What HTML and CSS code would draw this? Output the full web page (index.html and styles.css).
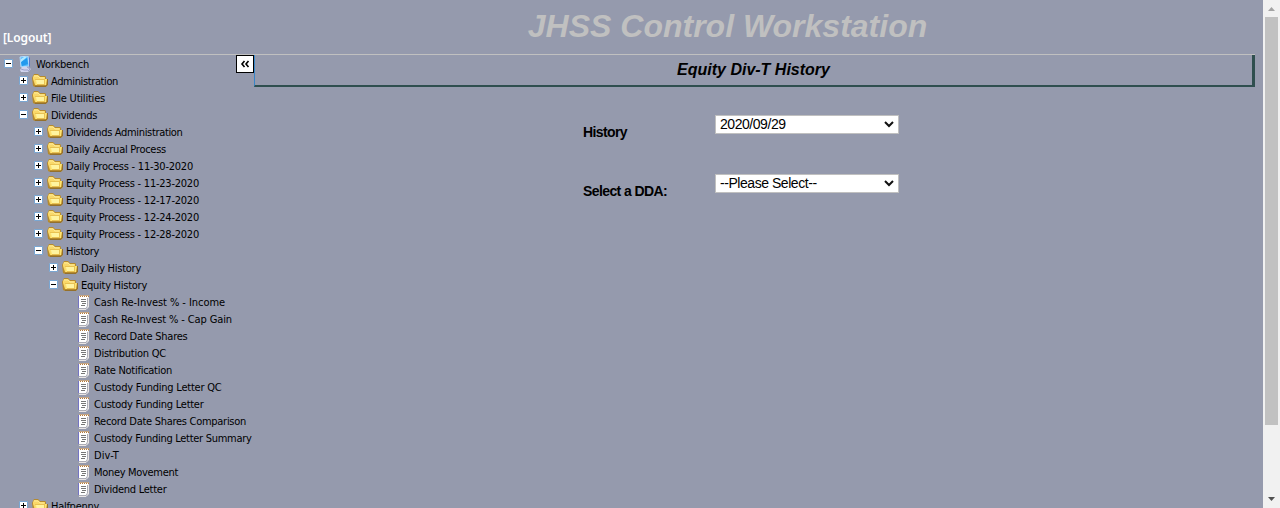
FILE: index.html
```html
<!DOCTYPE html>
<html lang="en">
<head>
<meta charset="utf-8">
<title>JHSS Control Workstation</title>
<link rel="stylesheet" href="styles.css">
</head>
<body>
<svg class="defs" width="0" height="0">
  <symbol id="folder" viewBox="0 0 16 13">
    <path d="M1 2l1-2h4l2 2h5l1 1v2h2v6l-2 2H3l-2-1-1-8z" fill="#b58a2e"/>
    <path d="M1 3l1-2h4l2 2h5v2H4v6H3L1 5z" fill="#f9d869"/>
    <path d="M2 2h4l2 2h4" fill="none" stroke="#fff0a5" stroke-width=".8"/>
    <path d="M3 5h12l-1 6H4z" fill="#ffe571"/>
    <path d="M4 6h8v4H5z" fill="#fff4a0"/>
    <path d="M3 5.500h9M12.500 5v5M5 10.500h8" fill="none" stroke="#dfb345" stroke-width=".7"/>
    <path d="M3 12.500h11M14.500 11v1M15.500 5v6" fill="none" stroke="#94702c"/>
  </symbol>
  <symbol id="note" viewBox="0 0 12 16">
    <path d="M1 2h9v11l-2 2H1z" fill="#fff"/>
    <path d="M.5 2v12" stroke="#7474c4"/>
    <path d="M1 1.500h10" stroke="#e2dcd5"/>
    <path d="M2 1v1M4 1v1M6 1v1M8 1v1M10 1v1" stroke="#a76c2c"/>
    <path d="M2 2.500h1M4 2.500h1M6 2.500h1M8 2.500h1M10 2.500h1" stroke="#b5793a"/>
    <path d="M3 5.500h5M3 7.500h5M4 9.500h4M3 11.500h4" stroke="#777"/>
    <path d="M10.500 3v10L8 15.500H1" fill="none" stroke="#e9e5e5"/>
    <path d="M9.500 4v8L8 14.500H1" fill="none" stroke="#8a8a96" stroke-width=".7"/>
  </symbol>
  <symbol id="computer" viewBox="0 0 13 16">
    <path d="M1 1l8-1 1 10-8 1z" fill="#55b9fa" stroke="#b5dcff"/>
    <path d="M2 6l6-4 1 6-6 2z" fill="#2299ee"/>
    <path d="M2 3l3-2h3L2 6z" fill="#b1eaff"/>
    <path d="M10 1l1 1v8l-1 1z" fill="#5878ca"/>
    <path d="M3 11h6l3 2-3 3H2l-1-2z" fill="#d0d3ec"/>
    <path d="M2 13l3 1h4M8 11l3 2-2 2" fill="none" stroke="#8a92c2" stroke-width=".8"/>
  </symbol>
</svg>
<div class="app">
  <div class="page">
    <header class="header">
      <a class="logout">[Logout]</a>
      <h1 class="brand">JHSS Control Workstation</h1>
    </header>
    <div class="body">
      <nav class="sidebar">
        <div class="tree" id="tree"></div>
        <button class="collapse" aria-label="Collapse"><svg width="10" height="8" viewBox="0 0 10 8"><path d="M4.500 1L2 4l2.500 3M8.500 1L6 4l2.500 3" fill="none" stroke="#000" stroke-width="1.600"/></svg></button>
      </nav>
      <main class="main">
        <h2 class="title">Equity Div-T History</h2>
        <form class="form">
          <div class="field"><label class="label" for="history">History</label><div class="control"><select class="select" id="history"><option>2020/09/29</option></select><svg class="chevron" width="10" height="7" viewBox="0 0 10 7"><path d="M1 1l4 4 4-4" fill="none" stroke="#111" stroke-width="2"/></svg></div></div>
          <div class="field"><label class="label" for="dda">Select a DDA:</label><div class="control"><select class="select" id="dda"><option>--Please Select--</option></select><svg class="chevron" width="10" height="7" viewBox="0 0 10 7"><path d="M1 1l4 4 4-4" fill="none" stroke="#111" stroke-width="2"/></svg></div></div>
        </form>
      </main>
    </div>
  </div>
  <div class="scrollbar">
    <svg class="arrow" width="17" height="17"><path d="M5 11h7l-3.500-4z" fill="#a3a3a3"/></svg>
    <div class="thumb"></div>
    <svg class="arrow" width="17" height="17"><path d="M5 6h7l-3.500 4z" fill="#505050"/></svg>
  </div>
</div>
<script src="tree.js"></script>
</body>
</html>
```

FILE: styles.css
```css
* { box-sizing: border-box; }
body { margin: 0; background: #959aad; color: #000; font-family: "Liberation Sans", Arial, sans-serif; overflow: hidden; }
.defs { position: absolute; }
.app { display: flex; height: 508px; overflow: hidden; }
.page { width: 1263px; padding-right: 8px; }
.header { display: flex; height: 55px; border-bottom: 1px solid #c0c0c0; }
.logout { width: 200px; padding: 30px 0 0 3px; color: #fff; font: 600 12px/16px "Noto Sans", sans-serif; letter-spacing: -.13px; }
.brand { flex: 1; margin: 0; padding-top: 7px; text-align: center; color: #c0c0c0; font: italic bold 32px/38px "Liberation Sans", sans-serif; }
.body { display: flex; }
.sidebar { display: flex; position: relative; width: 254px; height: 453px; overflow: hidden; }
.tree { width: 254px; }
.row { display: flex; align-items: center; height: 17px; padding-left: 4px; white-space: nowrap; }
.level-1 { padding-left: 19px; }
.level-2 { padding-left: 34px; }
.level-3 { padding-left: 49px; }
.level-4 { padding-left: 78px; }
.toggle { flex: none; width: 9px; height: 9px; margin-right: 4px; }
.icon { flex: none; width: 16px; height: 13px; margin-right: 3px; }
.computer { width: 13px; height: 16px; margin: 0 4px 0 2px; }
.note { width: 12px; height: 16px; margin-right: 4px; }
.name { padding-top: 2px; font: 11px/15px "DejaVu Sans Condensed", "DejaVu Sans", sans-serif; font-stretch: condensed; }
.collapse { position: absolute; left: 236px; top: 0; display: flex; align-items: center; justify-content: center; width: 18px; height: 18px; padding: 0; border: 1px solid #000; background: #fff; }
.main { width: 1001px; }
.title { height: 32px; margin: 0; border-left: 1px solid #3886c8; border-bottom: 2px solid #2f4f4f; border-right: 3px solid #2f4f4f; text-align: center; font: italic bold 16px/29px "Liberation Sans", sans-serif; }
.form { display: flex; flex-direction: column; gap: 39px; padding: 28px 0 0 329px; }
.field { display: flex; height: 20px; }
.label { width: 132px; padding-top: 8px; font: bold 14px/19px "Liberation Sans", sans-serif; letter-spacing: -.6px; }
.control { position: relative; width: 184px; }
.select { appearance: none; display: block; width: 184px; height: 19px; margin: 0; padding: 0 3px 0 4px; border: 1px solid #c0c0c0; border-radius: 0; background: #fff; color: #000; font: 14px/17px "Liberation Sans", sans-serif; letter-spacing: -.45px; }
.chevron { position: absolute; right: 5px; top: 6px; }
.scrollbar { display: flex; flex-direction: column; width: 17px; height: 508px; background: #f1f1f1; }
.arrow { flex: none; }
.thumb { width: 13px; height: 408px; margin: 0 2px auto; background: #c1c1c1; }
```

FILE: tree.js
```js
// level, state (+ closed, - open, . leaf), label, label width
const rows = [
  [0, '-', 'Workbench', 53], [1, '+', 'Administration', 67], [1, '+', 'File Utilities', 54],
  [1, '-', 'Dividends', 46], [2, '+', 'Dividends Administration', 116.500],
  [2, '+', 'Daily Accrual Process', 100], [2, '+', 'Daily Process - 11-30-2020', 127],
  [2, '+', 'Equity Process - 11-23-2020', 133], [2, '+', 'Equity Process - 12-17-2020', 133],
  [2, '+', 'Equity Process - 12-24-2020', 133], [2, '+', 'Equity Process - 12-28-2020', 133],
  [2, '-', 'History', 33], [3, '+', 'Daily History', 60], [3, '-', 'Equity History', 66],
  [4, '.', 'Cash Re-Invest % - Income', 131], [4, '.', 'Cash Re-Invest % - Cap Gain', 138],
  [4, '.', 'Record Date Shares', 93.500], [4, '.', 'Distribution QC', 72], [4, '.', 'Rate Notification', 78],
  [4, '.', 'Custody Funding Letter QC', 127.500], [4, '.', 'Custody Funding Letter', 109.500],
  [4, '.', 'Record Date Shares Comparison', 152], [4, '.', 'Custody Funding Letter Summary', 157.500],
  [4, '.', 'Div-T', 25], [4, '.', 'Money Movement', 84], [4, '.', 'Dividend Letter', 72.500],
  [1, '+', 'Halfpenny', 48]
];
document.getElementById('tree').innerHTML = rows.map(([level, state, label]) => {
  const toggle = state === '.' ? '' : `<svg class="toggle" viewBox="0 0 9 9"><path d="M.5.5h8v8h-8z" fill="#fff" stroke="#79a6d2"/><path d="M2 4.500h5${state === '+' ? 'M4.500 2v5' : ''}" stroke="#000"/></svg>`;
  const icon = level === 0 ? 'computer' : state === '.' ? 'note' : 'folder';
  return `<div class="row level-${level}">${toggle}<svg class="icon ${icon}"><use href="#${icon}"/></svg><span class="name">${label}</span></div>`;
}).join('');
// Spread each label over its nominal width.
document.querySelectorAll('.name').forEach((el, i) => {
  const natural = el.getBoundingClientRect().width;
  el.style.letterSpacing = (rows[i][3] - natural) / rows[i][2].length + 'px';
});
```
